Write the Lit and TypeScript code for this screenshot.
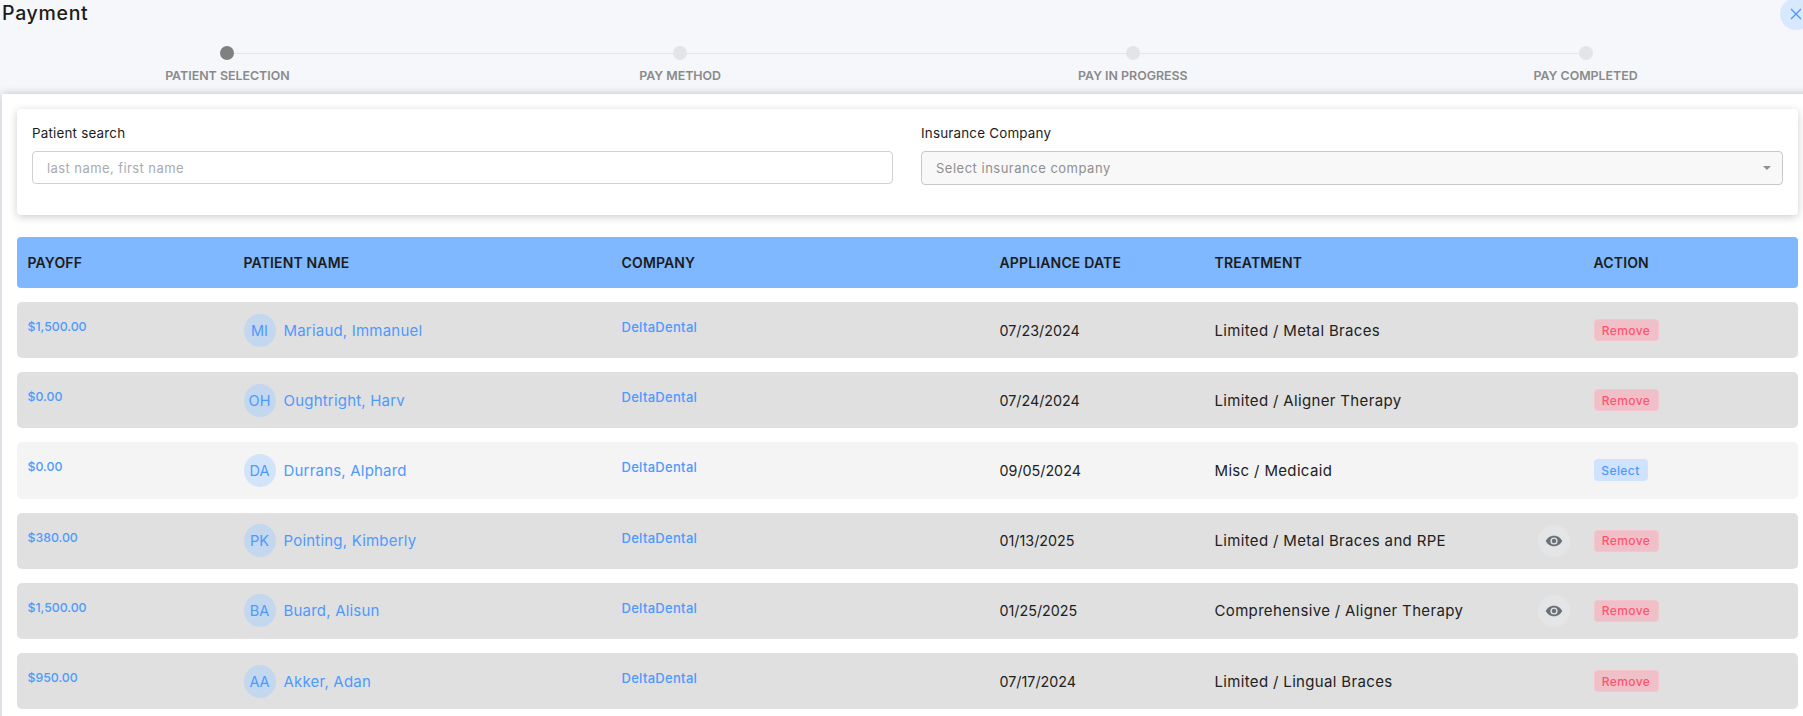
import { LitElement, html, css, svg } from "lit";
import { customElement } from "lit/decorators.js";

interface Row { payoff: string; initials: string; name: string; date: string; treatment: string; eye?: boolean; select?: boolean; }

const ROWS: Row[] = [
  { payoff: "$1,500.00", initials: "MI", name: "Mariaud, Immanuel", date: "07/23/2024", treatment: "Limited / Metal Braces" },
  { payoff: "$0.00", initials: "OH", name: "Oughtright, Harv", date: "07/24/2024", treatment: "Limited / Aligner Therapy" },
  { payoff: "$0.00", initials: "DA", name: "Durrans, Alphard", date: "09/05/2024", treatment: "Misc / Medicaid", select: true },
  { payoff: "$380.00", initials: "PK", name: "Pointing, Kimberly", date: "01/13/2025", treatment: "Limited / Metal Braces and RPE", eye: true },
  { payoff: "$1,500.00", initials: "BA", name: "Buard, Alisun", date: "01/25/2025", treatment: "Comprehensive / Aligner Therapy", eye: true },
  { payoff: "$950.00", initials: "AA", name: "Akker, Adan", date: "07/17/2024", treatment: "Limited / Lingual Braces" },
];
const STEPS = ["PATIENT SELECTION", "PAY METHOD", "PAY IN PROGRESS", "PAY COMPLETED"];

const eyeIcon = svg`<path fill="currentColor" d="M12 5C7 5 2.9 8 1 12c1.900 4 6 7 11 7s9.100-3 11-7c-1.900-4-6-7-11-7zm0 11.800a4.800 4.800 0 1 1 0-9.600 4.800 4.800 0 0 1 0 9.600z"/><circle cx="12" cy="12" r="3" fill="currentColor"/>`;

@customElement("app-root")
export class AppRoot extends LitElement {
  static styles = css`
    :host { display: block; width: 1803px; height: 716px; overflow: hidden; position: relative; background: #f5f7fb; font-family: "Inter", "Liberation Sans", sans-serif; color: #1f1f1f; }
    .page { width: 1812px; }
    .title { height: 25px; padding-top: 1px; line-height: 25px; padding-left: 2px; font-size: 19.500px; font-weight: 500; color: #1c1c1c; letter-spacing: 0.7px; }
    .close { position: absolute; left: 1780px; top: -2px; width: 32px; height: 32px; border-radius: 50%; background: #d8e9ff; color: #4d9aff; display: flex; align-items: center; justify-content: center; }
    .stepper { display: flex; padding: 20px 0 0 1px; height: 48px; }
    .step { width: 453px; position: relative; display: flex; flex-direction: column; align-items: center; }
    .step:not(:last-child)::after { content: ""; position: absolute; left: 50%; width: 100%; top: 7px; height: 1px; background: #e4e6ec; }
    .dot { width: 14px; height: 14px; border-radius: 50%; background: #e4e4e6; position: relative; z-index: 1; }
    .step.active .dot { background: #808080; }
    .step-label { margin-top: 7px; font-size: 12.400px; line-height: 17px; font-weight: 600; color: #8a8a8a; white-space: nowrap; }
    .panel { margin-left: 2px; height: 640px; background: #fff; box-shadow: 0 0 8px rgba(60, 60, 80, 0.3); padding: 15px 14px 0 15px; box-sizing: border-box; }
    .card { height: 106px; box-sizing: border-box; background: #fff; border-radius: 4px; box-shadow: 0 2px 8px rgba(0, 0, 0, 0.2); padding: 15px; display: grid; grid-template-columns: 861px 1fr; column-gap: 28px; }
    .field-label { font-size: 13.400px; line-height: 18px; font-weight: 400; color: #1c1c1c; margin-bottom: 9px; letter-spacing: 0.2px; }
    input { box-sizing: border-box; width: 100%; height: 33px; border: 1px solid #cfcfd4; border-radius: 4px; padding: 0 14px; font: inherit; font-size: 13px; letter-spacing: 0.42px; background: #fff; outline: none; }
    input::placeholder { color: #a9abb0; }
    .select { box-sizing: border-box; height: 34px; border: 1px solid #c8c8c8; border-radius: 4px; background: #f8f8f8; padding: 0 14px; font-size: 13px; letter-spacing: 0.5px; color: #8f8f8f; display: flex; align-items: center; justify-content: space-between; }
    .caret { width: 0; height: 0; border-left: 4px solid transparent; border-right: 4px solid transparent; border-top: 4px solid #8f8f8f; margin-right: -3px; }
    .grid { display: grid; grid-template-columns: 216px 378px 378px 215px 379px 1fr; padding-left: 10.500px; align-items: center; }
    .head { margin-top: 22px; height: 51px; background: #7fb8ff; border-radius: 4px; font-size: 14px; font-weight: 600; color: #1c1c1c; letter-spacing: 0.15px; }
    .rows { margin-top: 14px; display: flex; flex-direction: column; gap: 14px; }
    .row { height: 56.200px; background: #e0e0e0; border-radius: 5px; font-size: 15px; letter-spacing: 0.34px; color: #222; }
    .row.light { background: #f4f4f4; }
    .link { color: #4d9aff; font-weight: 500; align-self: start; margin-top: 16px; line-height: 18px; }
    .payoff { font-size: 12.300px; letter-spacing: 0; }
    .company { font-size: 13px; letter-spacing: 0.3px; }
    .date { font-size: 14.300px; letter-spacing: 0; }
    .patient { display: flex; align-items: center; gap: 8px; color: #4d9aff; font-size: 15px; letter-spacing: 0.2px; }
    .avatar { width: 32px; height: 33px; border-radius: 50%; background: #c3d7ee; display: flex; align-items: center; justify-content: center; font-size: 14.500px; letter-spacing: 0; flex: none; }
    .light .avatar { background: #d2e4f9; }
    .treat { display: flex; align-items: center; justify-content: space-between; padding-right: 24px; }
    .eye { width: 32px; height: 32px; border-radius: 50%; background: #e3e5e6; color: #6a7178; display: flex; align-items: center; justify-content: center; }
    .btn { display: inline-flex; align-items: center; justify-content: center; height: 22px; box-sizing: border-box; border-radius: 4px; font-size: 12px; font-weight: 500; letter-spacing: 0.4px; }
    .remove { width: 65px; background: #efc0c8; border: 1px solid #f6c4cd; color: #ff5470; }
    .pick { width: 54px; background: #cfe3ff; color: #4d9aff; }
  `;

  render() {
    return html`
      <div class="page">
        <div class="title">Payment</div>
        <div class="close">
          <svg width="14" height="14" viewBox="0 0 14 14" fill="none" stroke="currentColor" stroke-width="1.400"><path d="M2 2l10 10M12 2L2 12"/></svg>
        </div>
        <div class="stepper">
          ${STEPS.map((s, i) => html`<div class="step ${i === 0 ? "active" : ""}"><div class="dot"></div><div class="step-label">${s}</div></div>`)}
        </div>
        <div class="panel">
          <div class="card">
            <div>
              <div class="field-label">Patient search</div>
              <input placeholder="last name, first name" />
            </div>
            <div>
              <div class="field-label">Insurance Company</div>
              <div class="select"><span>Select insurance company</span><span class="caret"></span></div>
            </div>
          </div>
          <div class="grid head">
            <div>PAYOFF</div><div>PATIENT NAME</div><div>COMPANY</div><div>APPLIANCE DATE</div><div>TREATMENT</div><div>ACTION</div>
          </div>
          <div class="rows">
            ${ROWS.map((r) => html`
              <div class="grid row ${r.select ? "light" : ""}">
                <div class="link payoff">${r.payoff}</div>
                <div class="patient"><span class="avatar">${r.initials}</span><span>${r.name}</span></div>
                <div class="link company">DeltaDental</div>
                <div class="date">${r.date}</div>
                <div class="treat"><span>${r.treatment}</span>${r.eye ? html`<span class="eye"><svg width="18" height="18" viewBox="0 0 24 24">${eyeIcon}</svg></span>` : ""}</div>
                <div>${r.select ? html`<span class="btn pick">Select</span>` : html`<span class="btn remove">Remove</span>`}</div>
              </div>`)}
          </div>
        </div>
      </div>
    `;
  }
}
